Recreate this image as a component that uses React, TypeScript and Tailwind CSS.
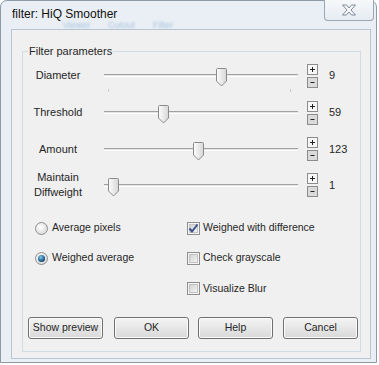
import React from "react";

function Thumb({ left }: { left: number }) {
  return (
    <svg
      className="absolute top-[-7px]"
      style={{ left }}
      width="11"
      height="19"
      viewBox="0 0 11 19"
    >
      <defs>
        <linearGradient id="thumbFill" x1="0" y1="0" x2="1" y2="0">
          <stop offset="0" stopColor="#fdfdfd" />
          <stop offset="1" stopColor="#d6d6d6" />
        </linearGradient>
      </defs>
      <path
        d="M0.5 1.5 Q0.5 0.5 1.5 0.5 H9.5 Q10.5 0.5 10.5 1.5 V13 L5.5 18 L0.5 13 Z"
        fill="url(#thumbFill)"
        stroke="#8a8a8a"
      />
    </svg>
  );
}

function Spin() {
  return (
    <div className="flex flex-col gap-[2px]">
      <svg width="11" height="11" viewBox="0 0 11 11">
        <rect x="0.5" y="0.5" width="10" height="10" fill="#f7f7f7" stroke="#8c8c8c" />
        <path d="M3 5.5 H8 M5.5 3 V8" stroke="#222" />
      </svg>
      <svg width="11" height="11" viewBox="0 0 11 11">
        <rect x="0.5" y="0.5" width="10" height="10" fill="#dadada" stroke="#8c8c8c" />
        <path d="M3.5 5.5 H7.5" stroke="#222" />
      </svg>
    </div>
  );
}

function SliderRow({
  label,
  pos,
  value,
  h,
  ticks,
}: {
  label: React.ReactNode;
  pos: number;
  value: string;
  h: string;
  ticks?: boolean;
}) {
  return (
    <div className={`flex items-center ${h}`}>
      <div className="w-[70px] text-center text-[11px] leading-[15px] text-[#262626]">{label}</div>
      <div className="relative ml-[11px] h-[3px] w-[194px] border-t border-b border-t-[#a2a2a2] border-b-white bg-[#e4e4e4]">
        <Thumb left={pos} />
        {ticks && (
          <>
            <span className="absolute left-[4px] top-[14px] h-[3px] w-[1px] bg-[#cdcdcd]" />
            <span className="absolute left-[186px] top-[14px] h-[3px] w-[1px] bg-[#cdcdcd]" />
          </>
        )}
      </div>
      <div className="ml-[9px]">
        <Spin />
      </div>
      <div className="ml-[11px] text-[11px] text-[#262626]">{value}</div>
    </div>
  );
}

function Radio({ label, checked, h }: { label: string; checked?: boolean; h: string }) {
  return (
    <div className={`flex items-center ${h}`}>
      <svg width="13" height="13" viewBox="0 0 13 13">
        <defs>
          <radialGradient id="radioIn" cx="0.4" cy="0.4" r="0.7">
            <stop offset="0" stopColor="#ffffff" />
            <stop offset="1" stopColor="#d4d4d4" />
          </radialGradient>
          <radialGradient id="radioDot" cx="0.4" cy="0.35" r="0.7">
            <stop offset="0" stopColor="#8fd0f0" />
            <stop offset="0.6" stopColor="#2a6f9c" />
            <stop offset="1" stopColor="#133b5c" />
          </radialGradient>
        </defs>
        <circle cx="6.5" cy="6.5" r="6" fill="url(#radioIn)" stroke="#8e8f8f" />
        {checked && <circle cx="6.5" cy="6.5" r="3.5" fill="url(#radioDot)" />}
      </svg>
      <span className="ml-[4px] text-[10.5px] text-[#262626]">{label}</span>
    </div>
  );
}

function Check({ label, checked, h }: { label: string; checked?: boolean; h: string }) {
  return (
    <div className={`flex items-center ${h}`}>
      <svg width="13" height="13" viewBox="0 0 13 13">
        <defs>
          <linearGradient id="checkIn" x1="0" y1="0" x2="1" y2="1">
            <stop offset="0" stopColor="#cfcfcf" />
            <stop offset="1" stopColor="#f6f6f6" />
          </linearGradient>
        </defs>
        <rect x="0.5" y="0.5" width="12" height="12" fill="#f4f4f4" stroke="#8e8f8f" />
        <rect x="2.5" y="2.5" width="8" height="8" fill="url(#checkIn)" stroke="#c4c4c4" />
        {checked && (
          <path d="M2.5 6.5 L5 9.5 L10.5 2.5" fill="none" stroke="#3a4f8a" strokeWidth="2" />
        )}
      </svg>
      <span className="ml-[3px] text-[10.5px] text-[#262626]">{label}</span>
    </div>
  );
}

function Btn({ label, className = "" }: { label: string; className?: string }) {
  return (
    <button
      type="button"
      className={`h-[22px] w-[75px] rounded-[3px] border border-[#707070] bg-gradient-to-b from-[#f4f4f4] to-[#d9d9d9] text-[10.5px] text-[#262626] shadow-[inset_0_0_0_1px_#fbfbfb] ${className}`}
    >
      {label}
    </button>
  );
}

export default function App() {
  return (
    <div className="h-[365px] w-[379px] overflow-hidden bg-white font-['Liberation_Sans',Arial,sans-serif]">
      <div className="flex h-[363px] w-[377px] flex-col rounded-t-[7px] border border-[#8d99a5] bg-[#e9eff5]">
        {/* title bar */}
        <div className="relative flex h-[28px] items-start">
          <div className="ml-[11px] mt-[6px] text-[12px] leading-[15px] text-[#111]">filter: HiQ Smoother</div>
          <div className="absolute left-[62px] top-[20px] flex gap-[18px] text-[9px] leading-[9px] text-[#a9c0dc] blur-[0.8px]">
            <span>Viewer</span>
            <span>Cutout</span>
            <span>Filter</span>
          </div>
          <button
            type="button"
            className="ml-auto mr-[2px] -mt-[1px] flex h-[21px] w-[50px] items-center justify-center rounded-b-[4px] border border-t-0 border-[#9aa7b4] bg-gradient-to-b from-[#f6f8fa] to-[#e6ecf2]"
          >
            <svg width="16" height="12" viewBox="0 0 16 12">
              <path
                d="M1.5 1 H5.5 L8 4 L10.5 1 H14.5 L10 6 L14.5 11 H10.5 L8 8 L5.5 11 H1.5 L6 6 Z"
                fill="#f7f9fb"
                stroke="#7d8995"
              />
            </svg>
          </button>
        </div>

        {/* client panel */}
        <div className="ml-[10px] h-[330px] w-[360px] border border-[#b9c5d1] bg-[#f0f0f0]">
          <div className="relative ml-[10px] mt-[21px] h-[301px] w-[339px] border border-[#d3dbe2]">
            <span className="absolute left-[5px] top-[-8px] bg-[#f0f0f0] px-[1px] text-[11px] leading-[14px] text-[#262626]">
              Filter parameters
            </span>

            <div className="pt-[5px]">
              <SliderRow label="Diameter" pos={112} value="9" h="h-[37px]" ticks />
              <SliderRow label="Threshold" pos={54} value="59" h="h-[37px]" />
              <SliderRow label="Amount" pos={89} value="123" h="h-[36px]" />
              <SliderRow
                label={
                  <>
                    Maintain
                    <br />
                    Diffweight
                  </>
                }
                pos={4}
                value="1"
                h="h-[36px]"
              />
            </div>

            <div className="mt-[10px] flex">
              <div className="w-[164px] pl-[12px]">
                <Radio label="Average pixels" h="h-[30px]" />
                <Radio label="Weighed average" checked h="h-[30px]" />
              </div>
              <div>
                <Check label="Weighed with difference" checked h="h-[30px]" />
                <Check label="Check grayscale" h="h-[30px]" />
                <Check label="Visualize Blur" h="h-[31px]" />
              </div>
            </div>

            <div className="mt-[13px] flex">
              <Btn label="Show preview" className="ml-[5px]" />
              <Btn label="OK" className="ml-[11px]" />
              <Btn label="Help" className="ml-[9px]" />
              <Btn label="Cancel" className="ml-[10px]" />
            </div>
          </div>
        </div>
      </div>
    </div>
  );
}
